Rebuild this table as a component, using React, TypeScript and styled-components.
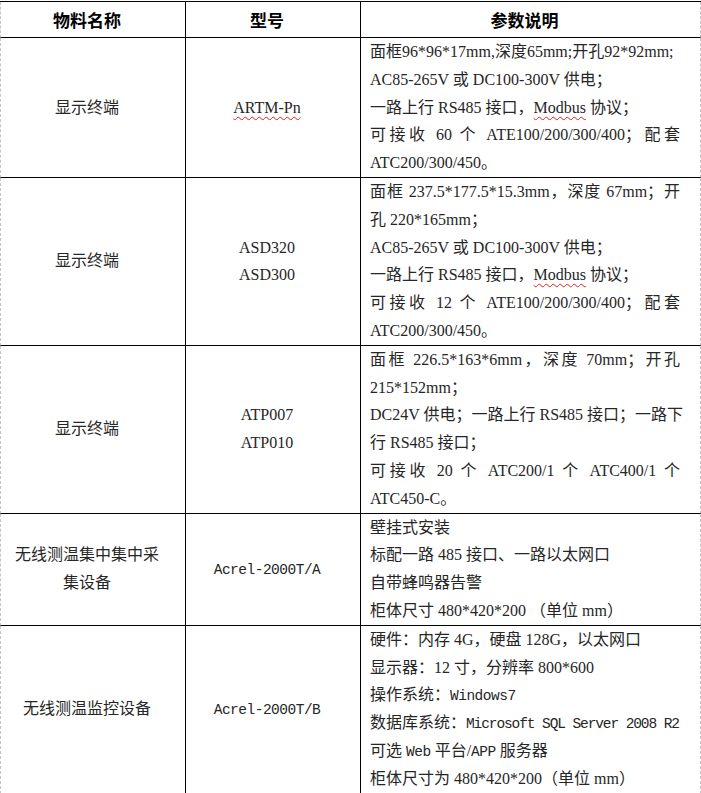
import React from 'react'
import styled, { createGlobalStyle } from 'styled-components'

const GlobalStyle = createGlobalStyle`
  html, body {
    margin: 0;
    padding: 0;
    background: #ffffff;
  }
  body {
    font-family: "Liberation Serif", "Noto Sans CJK SC", serif;
    color: #262626;
  }
`

type Line = { text: React.ReactNode; justify?: boolean }
type Row = { name: string[]; model: React.ReactNode[]; spec: Line[] }

const Wavy = styled.span`
  text-decoration: underline wavy #e02020;
  text-decoration-thickness: 1px;
  text-underline-offset: 3px;
`

// SimSun-like half-width latin
const Mono = styled.span<{ $tight?: boolean }>`
  font-family: "Liberation Mono", "Noto Sans CJK SC", monospace;
  font-size: 14.5px;
  letter-spacing: ${(p) => (p.$tight ? '-1.1px' : '-0.5px')};
`

const rows: Row[] = [
  {
    name: ['显示终端'],
    model: [<Wavy>ARTM-Pn</Wavy>],
    spec: [
      { text: '面框96*96*17mm,深度65mm;开孔92*92mm;' },
      { text: 'AC85-265V 或 DC100-300V 供电；' },
      { text: <>一路上行 RS485 接口，<Wavy>Modbus</Wavy> 协议；</> },
      { text: '可接收 60 个 ATE100/200/300/400；配套', justify: true },
      { text: 'ATC200/300/450。' },
    ],
  },
  {
    name: ['显示终端'],
    model: ['ASD320', 'ASD300'],
    spec: [
      { text: '面框 237.5*177.5*15.3mm，深度 67mm；开', justify: true },
      { text: '孔 220*165mm；' },
      { text: 'AC85-265V 或 DC100-300V 供电；' },
      { text: <>一路上行 RS485 接口，<Wavy>Modbus</Wavy> 协议；</> },
      { text: '可接收 12 个 ATE100/200/300/400；配套', justify: true },
      { text: 'ATC200/300/450。' },
    ],
  },
  {
    name: ['显示终端'],
    model: ['ATP007', 'ATP010'],
    spec: [
      { text: '面框 226.5*163*6mm，深度 70mm；开孔', justify: true },
      { text: '215*152mm；' },
      { text: 'DC24V 供电；一路上行 RS485 接口；一路下', justify: true },
      { text: '行 RS485 接口；' },
      { text: '可接收 20 个 ATC200/1 个 ATC400/1 个', justify: true },
      { text: 'ATC450-C。' },
    ],
  },
  {
    name: ['无线测温集中集中采', '集设备'],
    model: [<Mono>Acrel-2000T/A</Mono>],
    spec: [
      { text: '壁挂式安装' },
      { text: '标配一路 485 接口、一路以太网口' },
      { text: '自带蜂鸣器告警' },
      { text: '柜体尺寸 480*420*200 （单位 mm）' },
    ],
  },
  {
    name: ['无线测温监控设备'],
    model: [<Mono>Acrel-2000T/B</Mono>],
    spec: [
      { text: '硬件：内存 4G，硬盘 128G，以太网口' },
      { text: '显示器：12 寸，分辨率 800*600' },
      { text: <>操作系统：<Mono>Windows7</Mono></> },
      { text: <>数据库系统：<Mono $tight>Microsoft SQL Server 2008 R2</Mono></> },
      { text: <>可选 <Mono>Web</Mono> 平台/<Mono>APP</Mono> 服务器</> },
      { text: '柜体尺寸为 480*420*200（单位 mm）' },
    ],
  },
]

const ProductTable = () => {
  return (
    <>
      <GlobalStyle />
      <Sheet>
        <HeadCell $col={0}>物料名称</HeadCell>
        <HeadCell $col={1}>型号</HeadCell>
        <HeadCell $col={2}>参数说明</HeadCell>
        {rows.map((row, i) => (
          <React.Fragment key={i}>
            <Cell $col={0} $center>
              {row.name.map((t, j) => <TextLine key={j}>{t}</TextLine>)}
            </Cell>
            <Cell $col={1} $center>
              {row.model.map((t, j) => <TextLine key={j}>{t}</TextLine>)}
            </Cell>
            <Cell $col={2}>
              {row.spec.map((l, j) => (
                <TextLine key={j} $justify={l.justify}>{l.text}</TextLine>
              ))}
            </Cell>
          </React.Fragment>
        ))}
      </Sheet>
    </>
  )
}

const Sheet = styled.div`
  display: grid;
  grid-template-columns: 186px 175px 340px;
  width: 701px;
  margin-top: 1px;
  border-top: 1px solid #000;
`

const edge = (col: number) => {
  if (col === 0) return 'border-left: 1px dashed #c4c4c4; border-right: 1px solid #000;'
  if (col === 1) return 'border-right: 1px solid #000;'
  return 'border-right: 1px dashed #c4c4c4;'
}

const HeadCell = styled.div<{ $col: number }>`
  box-sizing: border-box;
  height: 36px;
  display: flex;
  align-items: center;
  justify-content: center;
  padding: 0 18px 0 6px;
  border-bottom: 1px solid #000;
  ${(p) => edge(p.$col)}
  font-family: "Noto Sans CJK SC", sans-serif;
  font-weight: 700;
  font-size: 17px;
  color: #000;
`

const Cell = styled.div<{ $col: number; $center?: boolean }>`
  box-sizing: border-box;
  display: flex;
  flex-direction: column;
  justify-content: ${(p) => (p.$center ? 'center' : 'flex-start')};
  align-items: ${(p) => (p.$center ? 'center' : 'stretch')};
  padding: ${(p) => (p.$center ? '0 18px 0 6px' : '0 20px 0 9px')};
  border-bottom: 1px solid #000;
  ${(p) => edge(p.$col)}
  font-size: 16px;
`

const TextLine = styled.div<{ $justify?: boolean }>`
  height: 27.8px;
  line-height: 27.8px;
  white-space: nowrap;
  text-align: ${(p) => (p.$justify ? 'justify' : 'left')};
  text-align-last: ${(p) => (p.$justify ? 'justify' : 'auto')};
`

export default ProductTable
